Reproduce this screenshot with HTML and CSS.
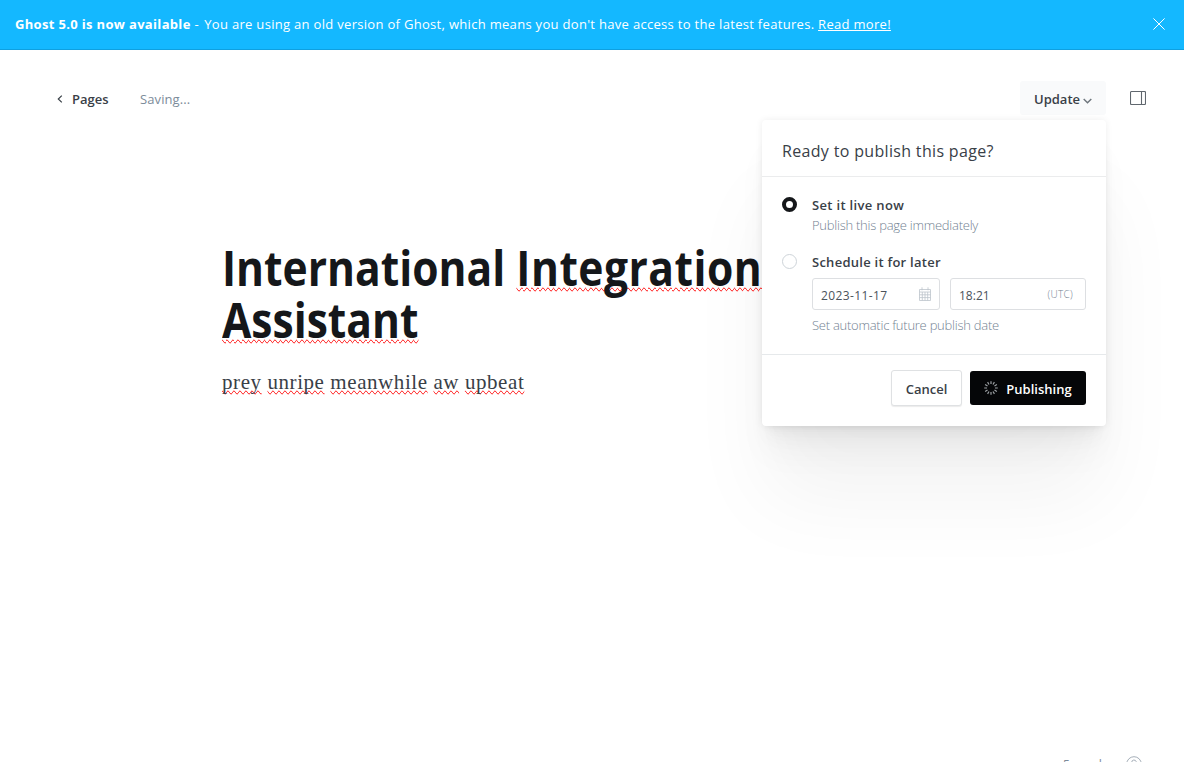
FILE: index.html
```
<!DOCTYPE html>
<html lang="en">
<head>
<meta charset="utf-8">
<title>International Integration Assistant</title>
<link rel="stylesheet" href="styles.css">
</head>
<body>
<div class="app">
  <aside class="banner">
    <p class="banner-text"><strong class="banner-strong">Ghost 5.0 is now available</strong><span class="banner-copy"> <span class="banner-dash">-</span> You are using an old version of Ghost, which means you don't have access to the latest features. <a class="banner-link" href="#">Read more!</a></span></p>
    <svg class="banner-close" viewBox="0 0 12 12" width="12" height="12"><path d="M.4.4l11.2 11.2M11.6.4L.4 11.6" fill="none" stroke="#fff" stroke-width="1"/></svg>
  </aside>
  <header class="toolbar">
    <a class="back" href="#"><svg width="6" height="8" viewBox="0 0 6 8"><path d="M4.8.6L1.3 4l3.5 3.4" fill="none" stroke="#394047" stroke-width="1.2"/></svg><span class="back-label">Pages</span></a>
    <span class="status">Saving...</span>
    <div class="actions">
      <div class="update"><span class="update-label">Update</span><svg width="9" height="6" viewBox="0 0 9 6"><path d="M.7.9l3.8 3.8L8.3.9" fill="none" stroke="#6d757c" stroke-width="1.4"/></svg>
        <section class="menu">
          <h2 class="menu-head"><span class="menu-title">Ready to publish this page?</span></h2>
          <div class="menu-body">
            <div class="option">
              <span class="radio radio-on"></span>
              <div class="option-text"><div class="option-label label-live">Set it live now</div><div class="option-desc">Publish this page immediately</div></div>
            </div>
            <div class="option">
              <span class="radio"></span>
              <div class="option-text"><div class="option-label">Schedule it for later</div>
                <div class="fields">
                  <div class="field field-date"><span class="value-date">2023-11-17</span>
                    <svg width="12" height="14" viewBox="0 0 12 14" fill="none" stroke="#bcc4cc" stroke-width=".8"><path d="M.5 2.500h11v11H.5zM.5 5h11M.5 7.800h11M.5 10.600h11M3.300 5v8.500M6 5v8.500M8.700 5v8.500M3 .3v3M9 .3v3"/></svg></div>
                  <div class="field field-time"><span class="value-time">18:21</span><span class="zone">(UTC)</span></div>
                </div>
                <div class="option-desc">Set automatic future publish date</div></div>
            </div>
          </div>
          <footer class="menu-foot">
            <button class="btn cancel"><span class="cancel-label">Cancel</span></button>
            <button class="btn publish">
              <svg width="14" height="14" viewBox="-7 -7 14 14" stroke="#9da1a5" stroke-width="1.200"><path d="M0-6.800v2.800M0 4v2.800M-6.800 0h2.800M4 0h2.800M3.400-5.890l-1.400 2.430M-2 3.460l-1.400 2.430M5.890-3.400l-2.430 1.400M-3.460 2l-2.430 1.400M5.890 3.400l-2.430-1.400M-3.460-2l-2.430-1.400M3.400 5.890l-1.400-2.430M-2-3.460l-1.400-2.430"/></svg>
              <span class="publish-label">Publishing</span></button>
          </footer>
        </section>
      </div>
      <svg class="panel-icon" width="16" height="14" viewBox="0 0 16 14"><path d="M1.500.5h13a1 1 0 0 1 1 1v11a1 1 0 0 1-1 1h-13a1 1 0 0 1-1-1v-11a1 1 0 0 1 1-1zM11.500.5v13" fill="none" stroke="#60676e" stroke-width="1.100"/></svg>
    </div>
  </header>
  <main class="editor">
    <h1 class="title">International <span class="typo title-mid">Integration</span><br><span class="typo">Assistant</span></h1>
    <p class="content"><span class="typo">prey</span> <span class="typo">unripe</span> <span class="typo">meanwhile</span> <span class="typo">aw</span> <span class="typo">upbeat</span></p>
  </main>
  <footer class="bottom"><span class="words">5 words</span>
    <svg width="16" height="16" viewBox="0 0 16 16" fill="none" stroke="#a5aeb8"><circle cx="8" cy="8" r="7.300"/><path d="M5.700 6.300a2.300 2.300 0 1 1 3.300 2.100q-1 .5-1 1.600M8 11.300v1.200"/></svg></footer>
</div>
</body>
</html>
```
FILE: styles.css
```
* { box-sizing: border-box; }
body { margin: 0; background: #fff; color: #394047; font-family: "Open Sans", sans-serif; font-size: 13px; }
.app { height: 762px; overflow: hidden; display: flex; flex-direction: column; }
svg { display: block; flex: none; }
a { color: inherit; text-decoration: none; }
.banner { height: 50px; flex: none; display: flex; align-items: center; justify-content: space-between; padding: 0 19px 2px 15px; background: #14b8ff; border-bottom: 1px solid #0fa0e0; color: #fff; }
.banner-text { margin: 0; white-space: nowrap; line-height: 20px; }
.banner-strong { font-weight: 700; letter-spacing: .33px; }
.banner-copy { letter-spacing: .308px; }
.banner-dash { letter-spacing: 2px; }
.banner-link { text-decoration: underline; }
.toolbar { height: 98px; flex: none; display: flex; align-items: center; padding: 0 38px 0 57px; }
.back { display: flex; align-items: center; gap: 9px; width: 83px; }
.back > svg { margin-top: -1px; }
.back-label, .update-label { font-weight: 600; white-space: nowrap; }
.status { color: #7c8b9a; letter-spacing: .1px; }
.actions { margin-left: auto; display: flex; align-items: center; gap: 24px; }
.update { position: relative; z-index: 2; width: 86px; height: 34px; margin-top: -2px; display: flex; align-items: center; gap: 3px; padding: 2px 0 0 14px; background: #f9fafb; border-radius: 3px; }
.update > svg { margin-top: 4px; }
.panel-icon { margin-top: -2px; }
.menu { position: absolute; z-index: 5; top: 39px; right: 0; width: 344px; height: 306px; background: #fff; border-radius: 4px;
  box-shadow: 0 0 7px rgba(0,0,0,.07), 0 2.1px 2.2px -5px rgba(0,0,0,.016), 0 5.1px 5.3px -5px rgba(0,0,0,.022), 0 9.5px 10px -5px rgba(0,0,0,.027), 0 17px 17.9px -5px rgba(0,0,0,.032), 0 31.8px 33.4px -5px rgba(0,0,0,.038), 0 76px 80px -5px rgba(0,0,0,.05); }
.menu-head { margin: 0; height: 57px; padding: 5px 20px 0; display: flex; align-items: center; border-bottom: 1px solid #ebeced; font-size: 16px; font-weight: 400; }
.menu-title { letter-spacing: .33px; white-space: nowrap; }
.menu-body { height: 178px; padding: 19px 20px 0; border-bottom: 1px solid #e6e9eb; }
.option { display: flex; gap: 15px; height: 57px; }
.radio { width: 15px; height: 15px; flex: none; margin-top: 1px; border: 1px solid #ced4d9; border-radius: 50%; background: #fff; }
.radio-on { border: 4px solid #15171a; }
.option-text { white-space: nowrap; }
.option-label { font-weight: 600; line-height: 20px; margin-top: -1px; letter-spacing: .26px; }
.label-live { letter-spacing: .33px; }
.option-desc { font-weight: 300; color: #738292; line-height: 20px; letter-spacing: -.25px; }
.fields { display: flex; gap: 10px; margin: 6px 0 5px; }
.field { height: 32px; display: flex; align-items: center; justify-content: space-between; border: 1px solid #dddfe2; border-radius: 3px; padding: 2px 8px 0; font-size: 12px; color: #4b535b; }
.field-date { width: 128px; }
.value-date { letter-spacing: .4px; }
.field-date svg { margin-top: -3px; }
.field-time { width: 136px; padding-right: 12px; }
.zone { font-size: 10px; font-weight: 300; color: #738292; margin-top: -3px; letter-spacing: .3px; }
.menu-foot { display: flex; justify-content: flex-end; gap: 8px; padding: 15px 20px 0; }
.btn { font: 600 13px "Open Sans", sans-serif; display: flex; align-items: center; justify-content: center; border-radius: 3px; padding: 0; white-space: nowrap; }
.cancel { width: 71px; height: 36px; background: #fff; color: #394047; border: 1px solid #dfe1e3; box-shadow: 0 1px 1px rgba(0,0,0,.08); padding-top: 1px; }
.publish { width: 116px; height: 34px; margin-top: 1px; background: #050608; color: #fff; border: 0; gap: 8px; }
.publish svg { margin-top: -1px; }
.publish-label { padding-top: 2px; }
.editor { padding: 94px 0 0 222px; flex: 1; }
.title { margin: 0; width: max-content; font-size: 48px; line-height: 52px; font-weight: 700; color: #15171a; white-space: nowrap; transform: scaleX(.887); transform-origin: 0 0; }
.title-mid { letter-spacing: .55px; }
.content { margin: 20px 0 0; font: 21px/32px "Liberation Serif", serif; letter-spacing: .57px; white-space: nowrap; }
.typo { text-decoration-line: spelling-error; }
.bottom { height: 6px; flex: none; display: flex; align-items: flex-start; gap: 19px; padding-left: 1063px; color: #7c8b9a; font-size: 12px; line-height: 18px; }
```
